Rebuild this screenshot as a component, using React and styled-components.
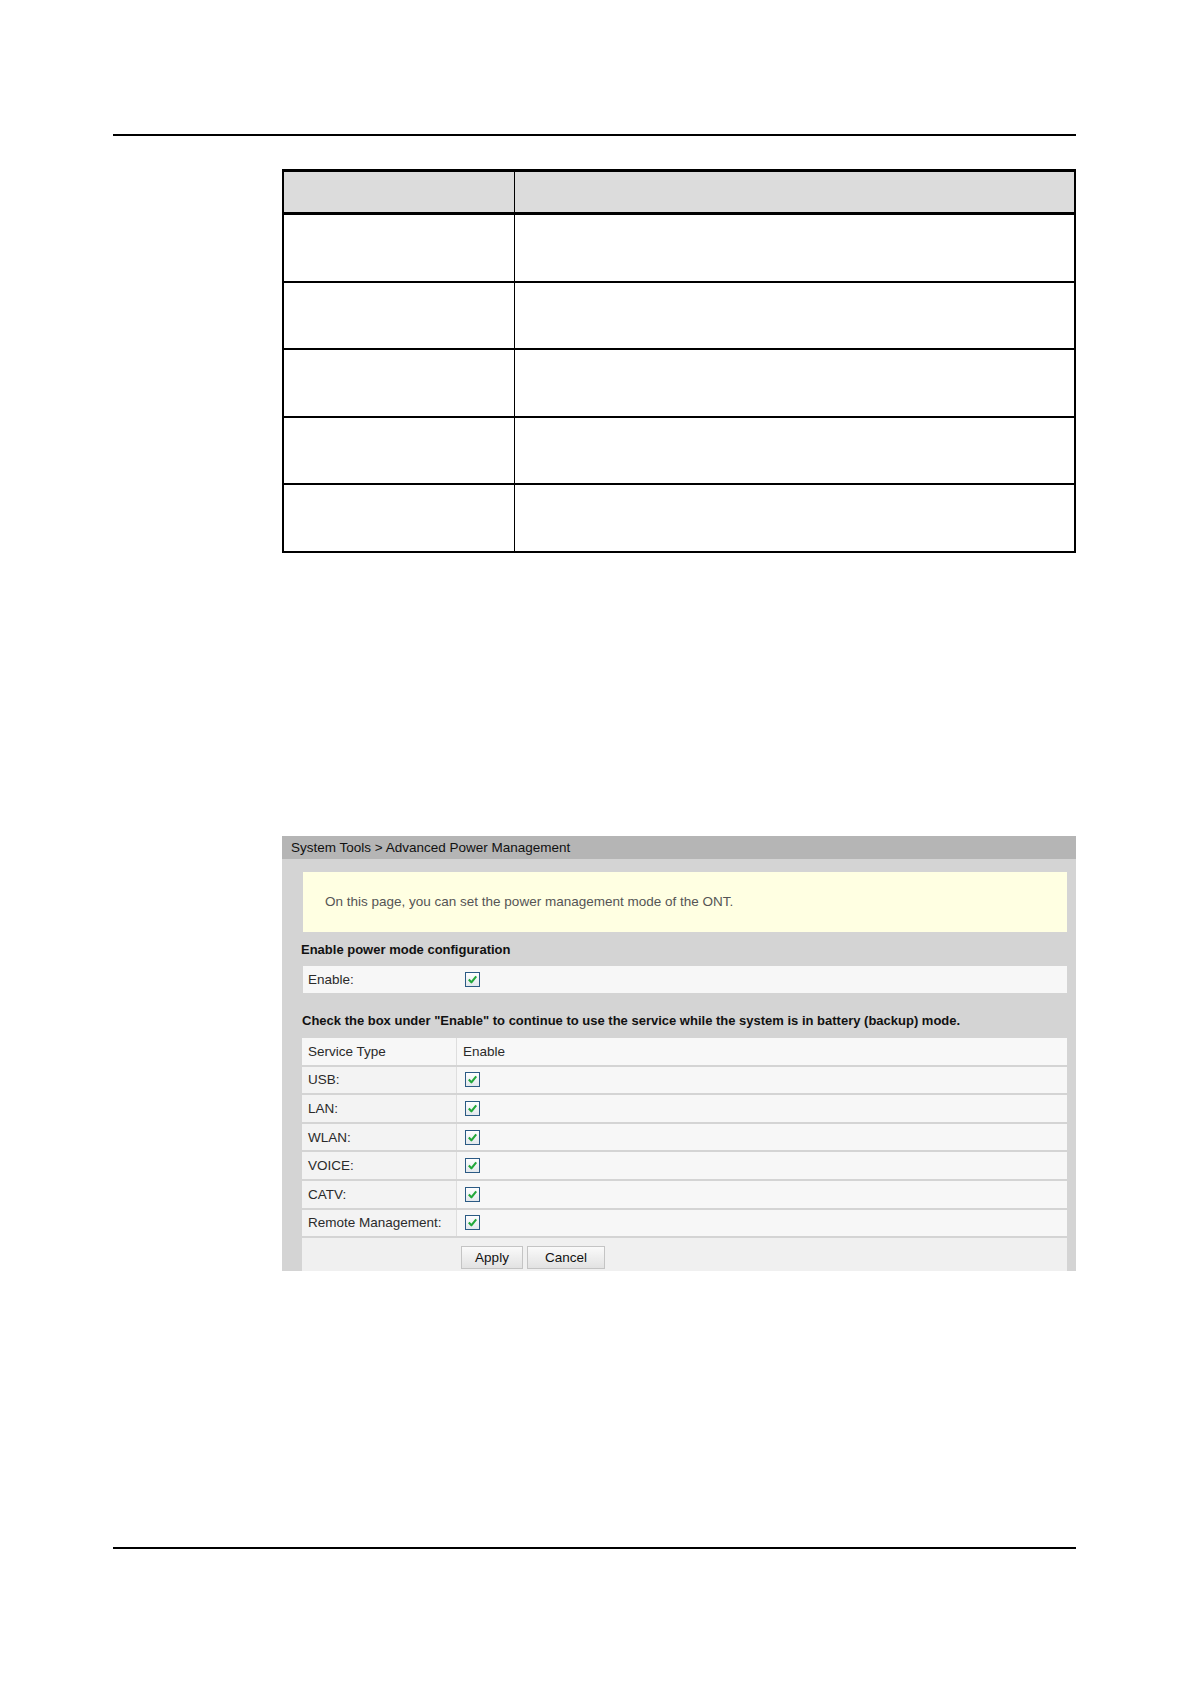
import React from 'react';
import styled, { createGlobalStyle } from 'styled-components';

const GlobalStyle = createGlobalStyle`
    html, body {
        margin: 0;
        padding: 0;
        background: #ffffff;
    }
    body {
        font-family: "Liberation Sans", Arial, sans-serif;
    }
`;

const Page = styled.div`
    width: 1191px;
    height: 1684px;
    background: #fff;
    padding-top: 134px;
    box-sizing: border-box;
`;

const Rule = styled.div`
    margin-left: 113px;
    width: 963px;
    height: 2px;
    background: #000;
`;

const Content = styled.div`
    margin-left: 282px;
    width: 794px;
`;

const DocTable = styled.table`
    width: 100%;
    margin-top: 33px;
    border-collapse: collapse;
    border: 2px solid #000;
    border-top-width: 3px;
`;

const HeadCell = styled.th`
    height: 40px;
    background: #dcdcdc;
    border-left: 1px solid #000;
    border-bottom: 3px solid #000;
    padding: 0;
    width: ${p => p.$w || 'auto'};
`;

const BodyCell = styled.td`
    height: 65.6px;
    border-left: 1px solid #000;
    border-top: 2px solid #000;
    padding: 0;
`;

const Shot = styled.div`
    margin-top: 283px;
    margin-bottom: 276px;
    font-family: "Liberation Sans", Arial, sans-serif;
    font-size: 13px;
    color: #1a1a1a;
`;

const TitleBar = styled.div`
    height: 23px;
    background: #b5b5b5;
    padding-left: 9px;
    display: flex;
    align-items: center;
    font-size: 13.5px;
    color: #111;
`;

const ShotBody = styled.div`
    background: #d4d4d4;
    padding: 13px 9px 0 21px;
    height: 412px;
    box-sizing: border-box;
    display: flex;
    flex-direction: column;
    overflow: hidden;

    & > * {
        flex-shrink: 0;
    }
`;

const Notice = styled.div`
    height: 60px;
    background: #ffffe2;
    padding-left: 22px;
    display: flex;
    align-items: center;
    color: #555;
    font-size: 13.5px;
`;

const SectionTitle = styled.div`
    font-weight: bold;
    font-size: 13px;
    color: #111;
    letter-spacing: ${p => p.$ls || '0'};
    margin: ${p => p.$m};
    line-height: 16px;
`;

const Grid = styled.div`
    display: flex;
    flex-direction: column;
    gap: 2px;
    margin-left: -1px;
`;

const Row = styled.div`
    display: grid;
    grid-template-columns: 154px 1fr;
    column-gap: ${p => (p.$split ? '1px' : '0')};
    height: ${p => p.$h || 26.6}px;
    background: ${p => (p.$split ? '#dedede' : '#f7f7f7')};
`;

const Cell = styled.div`
    display: flex;
    align-items: center;
    padding-left: ${p => p.$pl || 6}px;
    background: ${p => p.$bg || '#f7f7f7'};
    color: #2a2a2a;
    font-size: 13.5px;
`;

const ButtonRow = styled.div`
    height: 33px;
    margin-top: 2px;
    background: #f0f0f0;
    display: flex;
    align-items: flex-start;
    padding: 8px 0 0 159px;
    box-sizing: border-box;
    gap: 4px;
    margin-left: -1px;
`;

const Button = styled.button`
    height: 23px;
    width: ${p => p.$w}px;
    padding: 0;
    border: 1px solid #c4c4c4;
    background: linear-gradient(#fafafa, #e2e2e2);
    font-family: "Liberation Sans", Arial, sans-serif;
    font-size: 13.5px;
    color: #111;
`;

function Check() {
    return (
        <svg width="15" height="15" viewBox="0 0 15 15">
            <defs>
                <linearGradient id="cb" x1="0" y1="0" x2="0" y2="1">
                    <stop offset="0" stopColor="#ffffff" />
                    <stop offset="1" stopColor="#e2e7ec" />
                </linearGradient>
            </defs>
            <rect x="0.5" y="0.5" width="14" height="14" fill="url(#cb)" stroke="#2b5a84" />
            <path d="M3.8 7.6 L6.4 10.3 L11.2 4.4" fill="none" stroke="#22a83a" strokeWidth="2.1" strokeLinejoin="round" />
        </svg>
    );
}

const services = ['USB:', 'LAN:', 'WLAN:', 'VOICE:', 'CATV:', 'Remote Management:'];

export default function App() {
    return (
        <Page>
            <GlobalStyle />
            <Rule />
            <Content>
                <DocTable>
                    <thead>
                        <tr>
                            <HeadCell $w="230px" />
                            <HeadCell />
                        </tr>
                    </thead>
                    <tbody>
                        {[0, 1, 2, 3, 4].map(i => (
                            <tr key={i}>
                                <BodyCell />
                                <BodyCell />
                            </tr>
                        ))}
                    </tbody>
                </DocTable>

                <Shot>
                    <TitleBar>System Tools &gt; Advanced Power Management</TitleBar>
                    <ShotBody>
                        <Notice>On this page, you can set the power management mode of the ONT.</Notice>
                        <SectionTitle $m="10px 0 8px -2px">Enable power mode configuration</SectionTitle>
                        <Row $h={27}>
                            <Cell $pl={5}>Enable:</Cell>
                            <Cell $pl={8}><Check /></Cell>
                        </Row>
                        <SectionTitle $m="20px 0 9px -1px">
                            Check the box under "Enable" to continue to use the service while the system is in battery (backup) mode.
                        </SectionTitle>
                        <Grid>
                            <Row $split>
                                <Cell>Service Type</Cell>
                                <Cell $bg="#f8f8f8">Enable</Cell>
                            </Row>
                            {services.map(s => (
                                <Row $split key={s}>
                                    <Cell $bg="#f3f3f3">{s}</Cell>
                                    <Cell $pl={8}><Check /></Cell>
                                </Row>
                            ))}
                        </Grid>
                        <ButtonRow>
                            <Button $w={62}>Apply</Button>
                            <Button $w={78}>Cancel</Button>
                        </ButtonRow>
                    </ShotBody>
                </Shot>
            </Content>
            <Rule />
        </Page>
    );
}
